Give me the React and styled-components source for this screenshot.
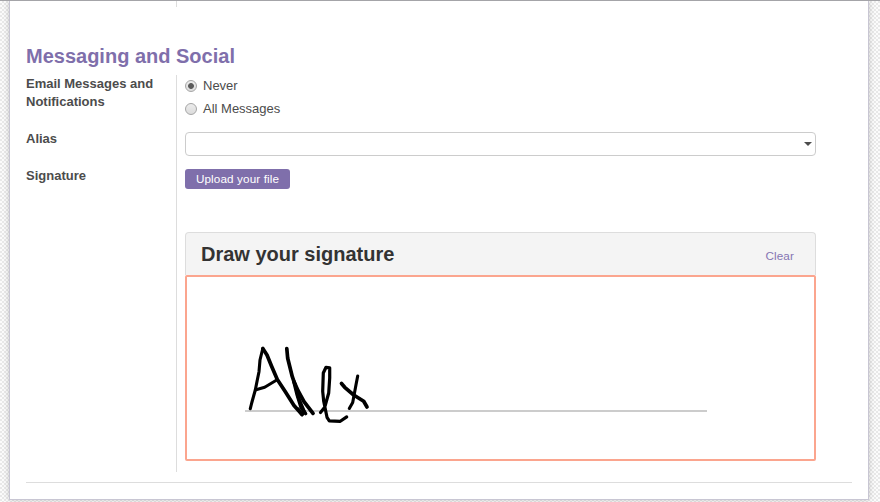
import React, { useState } from "react";
import styled, { createGlobalStyle } from "styled-components";

const GlobalStyle = createGlobalStyle`
  * { box-sizing: border-box; }
  body {
    margin: 0;
    overflow: hidden;
    font-family: "Liberation Sans", Arial, sans-serif;
    font-size: 13px;
    color: #4c4c4c;
  }
`;

const Page = styled.div`
  height: 502px;
  padding: 0 11px 2px 9px;
  border-top: 1px solid #a4a4a8;
  background: repeating-conic-gradient(#e8e8e8 0 25%, #fbfbfb 0 50%) 0 0 / 4px 4px;
  overflow: hidden;
`;

const Sheet = styled.main`
  height: 499px;
  padding: 0 16px;
  border: 1px solid #c8c6d3;
  border-top: 0;
  background: #fff;
  box-shadow: 0 0 6px rgba(0, 0, 0, 0.2);
`;

const PreviousGroup = styled.div`
  width: 151px;
  height: 6px;
  border-right: 1px solid #ddd;
`;

const SectionTitle = styled.h2`
  height: 24px;
  margin: 37px 0 7px;
  color: #7f6fab;
  font-size: 20px;
  line-height: 24px;
`;

const Group = styled.section`
  display: grid;
  grid-template-columns: 151px 631px;
  column-gap: 8px;
  height: 397px;
`;

const Labels = styled.div`
  display: flex;
  flex-direction: column;
  border-right: 1px solid #ddd;
`;

const Label = styled.div`
  height: ${(p) => p.$height}px;
  font-weight: bold;
  line-height: 18px;
`;

const Fields = styled.div`
  display: flex;
  flex-direction: column;
  align-items: flex-start;
`;

const RadioRow = styled.label`
  display: flex;
  align-items: center;
  gap: 6px;
  height: 23px;
  padding-bottom: 2px;
`;

const Radio = styled.input`
  appearance: none;
  width: 12px;
  height: 12px;
  margin: 0;
  border: 1px solid #a6a6a6;
  border-radius: 50%;
  background: linear-gradient(#ececec, #dcdcdc);

  &:checked {
    background: radial-gradient(circle, #5b5b5b 0 2.5px, transparent 3.3px),
      linear-gradient(#ececec, #dcdcdc);
  }
`;

const Combo = styled.div`
  display: flex;
  align-items: center;
  width: 631px;
  height: 24px;
  margin: 11px 0 13px;
  padding-right: 3px;
  border: 1px solid #ccc;
  border-radius: 4px;
`;

const ComboInput = styled.input`
  flex: 1;
  min-width: 0;
  border: 0;
  outline: 0;
  background: transparent;
  font: inherit;
`;

const Caret = styled.span`
  border: 4px solid transparent;
  border-top-color: #4c4c4c;
  border-bottom: 0;
`;

const UploadButton = styled.button`
  width: 105px;
  height: 20px;
  padding: 0;
  border: 0;
  border-radius: 3px;
  background: #7f6fab;
  color: #fff;
  font: 11.7px/20px "Liberation Sans", Arial, sans-serif;
  letter-spacing: 0.12px;
`;

const Panel = styled.div`
  width: 631px;
  margin-top: 43px;
`;

const PanelHeader = styled.div`
  display: flex;
  justify-content: space-between;
  align-items: center;
  height: 43px;
  padding: 0 21px 0 15px;
  border: 1px solid #ddd;
  border-bottom: 0;
  border-radius: 4px 4px 0 0;
  background: #f4f4f4;
`;

const PanelTitle = styled.strong`
  color: #333;
  font-size: 20px;
  line-height: 24px;
`;

const ClearLink = styled.button`
  padding: 3px 0 0;
  border: 0;
  background: none;
  color: #8575b3;
  font: 11.7px/14px "Liberation Sans", Arial, sans-serif;
  letter-spacing: 0.12px;
`;

const Pad = styled.div`
  height: 186px;
  border: 2px solid #fba58e;
  border-radius: 2px;

  svg { display: block; }
`;

const Rule = styled.hr`
  height: 1px;
  margin: 10px 0 0;
  border: 0;
  background: #ddd;
`;

const strokes = [
  { d: "M250.3 408.7L251.7 403L255.3 390L257.3 380L259 371.7L260 360L262.8 348.5", w: 3.1 },
  { d: "M262.8 348.5L267 355L271.7 366.5L277.3 379.5L285.5 392L294 405.5L302 414.5", w: 3.7 },
  { d: "M256 389.7L264.7 387.3L276.7 380", w: 3 },
  { d: "M286.8 348.7L287.7 358.3L292.3 376.7L294 381.7L297.3 395L301.3 408L305.5 413.5", w: 3.7 },
  { d: "M294 381.7L298 390.7L304 401.7L313 413.3", w: 3.8 },
  { d: "M295 384L298.5 398L304.5 412L302 414.5L298 409", w: 3.2 },
  { d: "M320.5 412.5L324.7 407.3L328.7 393L329.7 378L329.7 367.8L326 367.3L323.3 373L322.7 391.3L323.7 401.3L327 417.3L329.3 420.9L340.3 421.3L346.7 416.9", w: 3.2 },
  { d: "M341.5 383.5L344.7 387.3L353.7 395L363.7 401.3L367 407", w: 3.7 },
  { d: "M357.7 376L356 384.7L352.7 402.5L349.3 408.5", w: 3.1 },
];

const Signature = () => (
  <svg width="627" height="182" viewBox="187 277 627 182">
    <path d="M245 411H707" stroke="#ccc" strokeWidth="2" />
    {strokes.map((s) => (
      <path key={s.d} d={s.d} fill="none" stroke="#000" strokeWidth={s.w} strokeLinecap="round" strokeLinejoin="round" />
    ))}
  </svg>
);

export default function App() {
  const [notify, setNotify] = useState("Never");
  return (
    <>
      <GlobalStyle />
      <Page>
        <Sheet>
          <PreviousGroup />
          <SectionTitle>Messaging and Social</SectionTitle>
          <Group>
            <Labels>
              <Label $height={55}>Email Messages and Notifications</Label>
              <Label $height={37}>Alias</Label>
              <Label $height={37}>Signature</Label>
            </Labels>
            <Fields>
              {["Never", "All Messages"].map((option) => (
                <RadioRow key={option}>
                  <Radio type="radio" name="notify" checked={notify === option} onChange={() => setNotify(option)} />
                  {option}
                </RadioRow>
              ))}
              <Combo>
                <ComboInput aria-label="Alias" />
                <Caret />
              </Combo>
              <UploadButton>Upload your file</UploadButton>
              <Panel>
                <PanelHeader>
                  <PanelTitle>Draw your signature</PanelTitle>
                  <ClearLink>Clear</ClearLink>
                </PanelHeader>
                <Pad>
                  <Signature />
                </Pad>
              </Panel>
            </Fields>
          </Group>
          <Rule />
        </Sheet>
      </Page>
    </>
  );
}
